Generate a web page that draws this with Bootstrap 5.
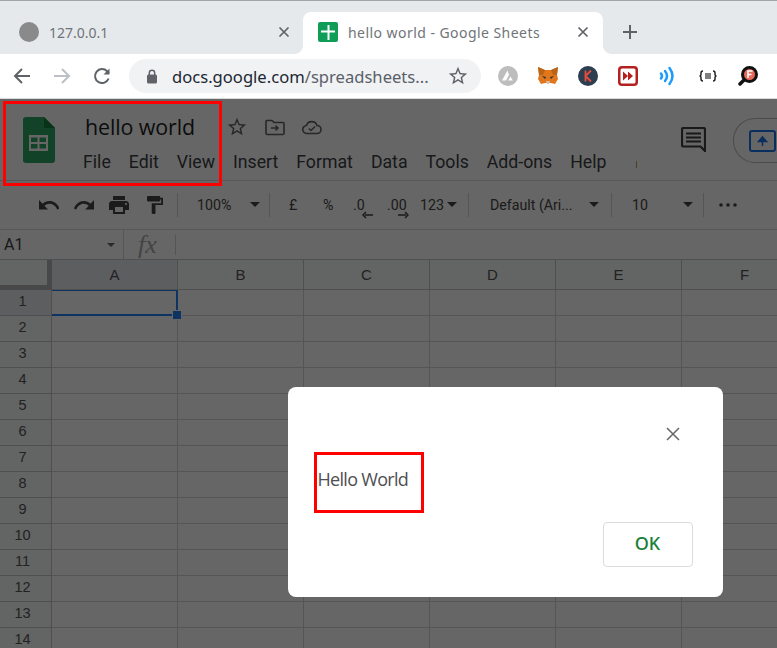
<!doctype html>
<html lang="en">
<head>
<meta charset="utf-8">
<title>hello world - Google Sheets</title>
<link href="https://cdn.jsdelivr.net/npm/bootstrap@5.3.0/dist/css/bootstrap.min.css" rel="stylesheet">
<style>
html,body{height:648px;overflow:hidden;background:#fff}
body{font-family:"Roboto","Liberation Sans",sans-serif;position:relative;width:777px}
.tabstrip{height:54px;background:#e6e9ec;border-top:1px solid #a3a5a7;padding-top:11px}
.tab-a{width:303px;height:42px;padding:0 12px 2px 19px;color:#6f7478;font:14px "Noto Sans",sans-serif}
.tab-b{width:300px;height:42px;background:#fff;border-radius:8px 8px 0 0;padding:0 13px 2px 15px;color:#6f7478;font:14px "Noto Sans",sans-serif;letter-spacing:.45px;position:relative}
.tab-b::before,.tab-b::after{content:"";position:absolute;bottom:0;width:8px;height:8px}
.tab-b::before{left:-8px;background:radial-gradient(circle at 0 0,transparent 7.5px,#fff 8px)}
.tab-b::after{right:-8px;background:radial-gradient(circle at 100% 0,transparent 7.5px,#fff 8px)}
.fav-grey{width:20px;height:20px;border-radius:50%;background:#8a8a8a;margin-right:10px}
.fav-sheet{margin-right:10px}
.tab-x{margin-left:auto}
.newtab{margin-left:19px;margin-bottom:2px}
.toolbar{height:45px;background:#fff;border-bottom:1px solid #d9dadb;padding:0 0 0 12px}
.tool-ico{width:20px;height:20px;margin-right:20px}
.omni{width:352px;height:34px;background:#f0f2f4;border-radius:17px;margin-left:-3px;padding:0 12px 0 17px;font:16.6px "Noto Sans",sans-serif;color:#5a6068;white-space:nowrap}
.omni b{font-weight:400;color:#202732}
.lock{margin-right:14px}
.ext-row{gap:20px;margin-left:17px}
.ext-row svg{display:block}
.sheet-head{height:82px;border-bottom:1px solid #dadce0;background:#fff;position:relative;padding-left:23px}
.logo{margin-top:18px}
.doc-title{font:21.4px/28px "Open Sans","Noto Sans",sans-serif;color:#1f1f1f;letter-spacing:-.1px}
.title-col{margin-left:28px;padding-top:14px}
.title-row{height:28px;margin-left:2px}
.title-ico{gap:17px;margin-left:31px}
.menus{font:17.7px/24px Roboto,sans-serif;color:#3c4043;gap:18px;margin-top:9px}
.tick{position:absolute;left:636px;top:62px;width:1px;height:7px;background:#b9a24a}
.head-right{margin-left:auto;gap:27px}
.cmt{margin-top:28px}
.share{width:44px;height:45px;border:1px solid #bbb;border-radius:22px 0 0 22px;border-right:0;padding:11px 0 0 15px;margin-top:19px}
.tbar{height:49px;background:#fff;border-bottom:1px solid #dadce0;padding-left:39px;font:14.2px Roboto,sans-serif;color:#444746;display:grid;grid-template-columns:35px 35px 38px 30px 20px 53px 19px 20px 34px 30px 34px 33px 27px 21px 22px 99px 22px 21px 51px 20px 16px 18px;align-items:center;justify-items:start;padding-bottom:1px}
.sep{display:block;width:1px;height:24px;background:#d5d5d5}
.arr{display:block}
.dec{position:relative;display:block}
.dec svg{position:absolute;top:14px}
.dec-l svg{left:9px}
.dec-r svg{left:11px}
.fbar{height:30px;background:#fff;border-bottom:1px solid #c4c7c5;font:16px Roboto,sans-serif;color:#3c4043;padding-left:4px}
.cellname{width:103px}
.fbar .sep-a{width:1px;height:100%;background:#d5d5d5;margin-left:8px}
.fbar .sep-b{width:1px;height:20px;background:#d5d5d5}
.fx{font:italic 26px/28px "Liberation Serif",serif;color:#aaa;margin-left:14px;width:37px}
.gridhead,.gridwrap{display:grid;grid-template-columns:52px repeat(6,126px);font:14px "Liberation Sans",Arial,sans-serif;color:#444}
.gridwrap{grid-auto-rows:26px;background:#fff}
.gcell{border-right:1px solid #d4d4d4;border-bottom:1px solid #d4d4d4}
.ghead{height:30px;background:#f8f9fa;border-right:1px solid #c4c7c5;border-bottom:1px solid #c4c7c5;display:flex;align-items:center;justify-content:center;color:#555;font-size:15px}
.ghead.corner{border-right:5px solid #b5b5b5;border-bottom:5px solid #b5b5b5}
.ghead.on,.rownum.on{background:#e8eaed}
.rownum{background:#f8f9fa;border-right:1px solid #c4c7c5;border-bottom:1px solid #c4c7c5;display:flex;align-items:center;justify-content:center;color:#555;font-size:14.5px;padding-bottom:3px;padding-right:6px}
.selcell{position:absolute;left:52px;top:290px;width:126px;height:26px;border-top:1px solid #1e80f5;border-right:2px solid #1e80f5;border-bottom:2px solid #1e80f5}
.handle{position:absolute;right:-5px;bottom:-5px;width:8px;height:8px;background:#1e80f5;box-shadow:0 0 0 1px #fff}
.dim{position:absolute;left:0;top:99px;width:777px;height:549px;background:rgba(0,0,0,.6)}
.dlg{position:absolute;left:288px;top:387px;width:435px;height:210px;background:#fff;border-radius:8px}
.dlg-x{position:absolute;left:377px;top:39px}
.dlg-text{position:absolute;left:29.500px;top:80px;font:18px/24px "Open Sans","Noto Sans",sans-serif;color:#4e4f52;letter-spacing:-.7px}
.ok{position:absolute;left:315px;top:135px;width:90px;height:45px;border:1px solid #dadce0;border-radius:4px;background:#fff;color:#188038;font:500 18px "Noto Sans",sans-serif;padding:0 1px 4px 0}
.redbox{position:absolute;border:3px solid #f00}
.rb1{left:3px;top:101px;width:219px;height:85px}
.rb2{left:314px;top:452px;width:110px;height:61px}
</style>
</head>
<body>
<div class="tabstrip d-flex">
  <div class="tab-a d-flex align-items-center">
    <span class="fav-grey"></span><span>127.0.0.1</span>
    <svg class="tab-x" width="14" height="14" viewBox="0 0 14 14"><path d="M2.500 2.500l9 9M11.500 2.500l-9 9" stroke="#5f6368" stroke-width="1.700"/></svg>
  </div>
  <div class="tab-b d-flex align-items-center">
    <svg class="fav-sheet" width="20" height="20" viewBox="0 0 20 20"><rect width="20" height="20" rx="2" fill="#0f9d58"/><path d="M3 9.500h14M10.500 3v15" stroke="#fff" stroke-width="2"/></svg>
    <span>hello world - Google Sheets</span>
    <svg class="tab-x" width="14" height="14" viewBox="0 0 14 14"><path d="M2.500 2.500l9 9M11.500 2.500l-9 9" stroke="#5f6368" stroke-width="1.700"/></svg>
  </div>
  <svg class="newtab align-self-center" width="16" height="16" viewBox="0 0 16 16"><path d="M8 1v14M1 8h14" stroke="#5f6368" stroke-width="2"/></svg>
</div>
<div class="toolbar d-flex align-items-center">
  <svg class="tool-ico" viewBox="0 0 20 20"><path d="M18 10H3.500M10 3l-7 7 7 7" fill="none" stroke="#5f6368" stroke-width="2"/></svg>
  <svg class="tool-ico" viewBox="0 0 20 20"><path d="M2 10h14.500M10 3l7 7-7 7" fill="none" stroke="#bdc0c4" stroke-width="2"/></svg>
  <svg class="tool-ico" viewBox="0 0 20 20"><path d="M16.600 12.500a7 7 0 1 1-1.500-7.300L17 7" fill="none" stroke="#5f6368" stroke-width="2"/><path d="M17.500 2.500v6h-6z" fill="#5f6368"/></svg>
  <div class="omni d-flex align-items-center">
    <svg class="lock" width="12" height="15" viewBox="0 0 12 15"><rect x="1" y="5.500" width="10" height="9" rx="1.500" fill="#5f6368"/><path d="M3.300 6V4a2.700 2.700 0 0 1 5.400 0v2" fill="none" stroke="#5f6368" stroke-width="1.500"/></svg>
    <span><b>docs.google.com</b>/spreadsheets...</span>
    <svg class="ms-auto" width="22" height="22" viewBox="0 0 24 24"><path fill="#5f6368" d="M22 9.240l-7.190-.62L12 2 9.190 8.630 2 9.240l5.460 4.730L5.820 21 12 17.270 18.180 21l-1.630-7.030L22 9.240zM12 15.400l-3.760 2.270 1-4.280-3.320-2.880 4.380-.38L12 6.100l1.710 4.040 4.380.38-3.320 2.880 1 4.280L12 15.400z"/></svg>
  </div>
  <div class="ext-row d-flex align-items-center">
    <svg width="20" height="20" viewBox="0 0 20 20"><circle cx="10" cy="10" r="10" fill="#bdbdbd"/><path d="M9.500 4.500L4 14.500h4l3-5.500zM12.500 10.500l-2.300 4h4.600z" fill="#fff"/></svg>
    <svg width="20" height="20" viewBox="0 0 20 20"><path d="M0 1l7 3h6l7-3-1 8 1 4-3 5-4-1H7l-4 1-3-5 1-4z" fill="#e2761b"/><path d="M0 1l7 3-2 5-4 0zM20 1l-7 3 2 5 4 0z" fill="#b8651a"/><path d="M4 10l4 1-1 2zM16 10l-4 1 1 2z" fill="#233447"/><path d="M8 15h4l-1 3H9z" fill="#d7c1b3"/></svg>
    <svg width="20" height="20" viewBox="0 0 20 20"><circle cx="10" cy="10" r="10" fill="#2c3e50"/><path d="M7.500 4.500v11M13 4.500l-5.500 5.500 5.500 5.500" fill="none" stroke="#e74c3c" stroke-width="1.800"/></svg>
    <svg width="20" height="20" viewBox="0 0 20 20"><rect width="20" height="20" rx="4" fill="#b3201f"/><rect x="2.500" y="2.500" width="15" height="15" rx="1.500" fill="#fff"/><path d="M5 5.500l5 4.500-5 4.500zM10 5.500l5 4.500-5 4.500z" fill="#b3201f"/></svg>
    <svg width="20" height="20" viewBox="0 0 20 20"><path d="M3 7.500q2 2.500 0 5M7 5q4 5 0 10M11.500 2q6 8 0 16" fill="none" stroke="#1a9bff" stroke-width="2.500" stroke-linecap="round"/></svg>
    <svg width="20" height="20" viewBox="0 0 20 20"><path d="M5 5q-2 0-2 2v1.500q0 1.500-1.500 1.500Q3 10 3 11.500V13q0 2 2 2M15 5q2 0 2 2v1.500q0 1.500 1.500 1.500-1.500 0-1.500 1.500V13q0 2-2 2" fill="none" stroke="#222" stroke-width="1.500"/><path d="M7 8h6M7 10h6M7 12h6" stroke="#555" stroke-width="1.300"/></svg>
    <svg width="20" height="20" viewBox="0 0 20 20"><circle cx="11.500" cy="8.500" r="7" fill="#e8685c" stroke="#111" stroke-width="3"/><path d="M6 14l-4 4" stroke="#111" stroke-width="3.500" stroke-linecap="round"/><path d="M14.500 5h-4.500v7M10 8.500h3.500" fill="none" stroke="#fff" stroke-width="1.500"/></svg>
  </div>
</div>

<div class="sheet-head d-flex">
  <svg class="logo" width="32" height="46" viewBox="0 0 32 46"><path d="M3 0h18l11 11v32a3 3 0 0 1-3 3H3a3 3 0 0 1-3-3V3a3 3 0 0 1 3-3z" fill="#2da564"/><path d="M21 0l11 11H21z" fill="#188038"/><rect x="6" y="18" width="19" height="16" fill="#fff"/><path d="M8 20.500h6.500V25H8zM16.500 20.500H23V25h-6.500zM8 27h6.500v4.500H8zM16.500 27H23v4.500h-6.500z" fill="#2da564"/></svg>
  <div class="title-col">
    <div class="title-row d-flex align-items-center">
      <span class="doc-title">hello world</span>
      <div class="title-ico d-flex align-items-center">
        <svg width="22" height="22" viewBox="0 0 24 24"><path fill="#5f6368" d="M22 9.240l-7.190-.62L12 2 9.190 8.630 2 9.240l5.460 4.730L5.820 21 12 17.270 18.180 21l-1.630-7.030L22 9.240zM12 15.400l-3.760 2.270 1-4.280-3.320-2.880 4.380-.38L12 6.100l1.710 4.040 4.380.38-3.320 2.880 1 4.280L12 15.400z"/></svg>
        <svg width="20" height="18" viewBox="0 0 20 18"><path d="M1 3.500a1 1 0 0 1 1-1h5l2 2h9a1 1 0 0 1 1 1v10a1 1 0 0 1-1 1H2a1 1 0 0 1-1-1z" fill="none" stroke="#5f6368" stroke-width="1.600"/><path d="M6 10h7M10.500 7.500L13 10l-2.500 2.500" fill="none" stroke="#5f6368" stroke-width="1.500"/></svg>
        <svg width="20" height="15" viewBox="0 0 20 15"><path d="M5 13.500a4 4 0 0 1-.5-8 5.500 5.500 0 0 1 10.500 0 4 4 0 0 1 0 8z" fill="none" stroke="#5f6368" stroke-width="1.600"/><path d="M6.800 8.500L9 10.500l4-4" fill="none" stroke="#5f6368" stroke-width="1.500"/></svg>
      </div>
    </div>
    <div class="menus d-flex">
      <span>File</span><span>Edit</span><span>View</span><span>Insert</span><span>Format</span><span>Data</span><span>Tools</span><span>Add-ons</span><span>Help</span>
    </div>
  </div>
  <span class="tick"></span>
  <div class="head-right d-flex">
    <svg class="cmt" width="25" height="25" viewBox="0 0 25 25"><path d="M2.500 1h20a1.500 1.500 0 0 1 1.500 1.500V24l-4.500-4.500H2.500A1.500 1.500 0 0 1 1 18V2.500A1.500 1.500 0 0 1 2.500 1z" fill="none" stroke="#3c4043" stroke-width="2.200"/><path d="M5 6.500h15M5 10.500h15M5 14.500h15" stroke="#3c4043" stroke-width="2"/></svg>
    <div class="share"><svg class="d-block" width="27" height="22" viewBox="0 0 27 22"><rect x="1" y="1" width="25" height="20" rx="2" fill="none" stroke="#1a73e8" stroke-width="2"/><path d="M13.500 16V9M9.500 11.500l4-4.500 4 4.500z" fill="#1a73e8" stroke="#1a73e8" stroke-width="1.500"/></svg></div>
  </div>
</div>

<div class="tbar">
  <svg class="arr" width="20" height="10" viewBox="2 7 20 9.500" preserveAspectRatio="none"><path fill="#444" d="M12.500 8c-2.650 0-5.050.990-6.900 2.600L2 7v9h9l-3.620-3.620c1.390-1.160 3.160-1.880 5.120-1.880 3.540 0 6.550 2.310 7.600 5.500l2.370-.780C21.080 11.030 17.150 8 12.500 8z"/></svg>
  <svg class="arr" width="20" height="10" viewBox="1.500 7 20.500 9.500" preserveAspectRatio="none"><path fill="#444" d="M18.400 10.600C16.550 8.990 14.150 8 11.500 8c-4.650 0-8.580 3.030-9.960 7.220L3.900 16c1.050-3.190 4.050-5.500 7.600-5.500 1.950 0 3.730.720 5.120 1.880L13 16h9V7l-3.600 3.600z"/></svg>
  <svg class="arr" width="20" height="18" viewBox="2 3 20 18"><path fill="#444" d="M19 8H5c-1.660 0-3 1.340-3 3v6h4v4h12v-4h4v-6c0-1.660-1.340-3-3-3zm-3 11H8v-5h8v5zm3-7c-.550 0-1-.450-1-1s.450-1 1-1 1 .450 1 1-.450 1-1 1zm-1-9H6v4h12V3z"/></svg>
  <svg class="arr" width="16" height="18" viewBox="4 2 17 20" preserveAspectRatio="none"><path fill="#444" d="M18 4V3c0-.550-.450-1-1-1H5c-.550 0-1 .450-1 1v4c0 .550.450 1 1 1h12c.550 0 1-.450 1-1V6h1v4H9v11c0 .550.450 1 1 1h2c.550 0 1-.450 1-1v-9h8V4h-3z"/></svg>
  <span class="sep"></span>
  <span>100%</span>
  <svg class="arr" width="10" height="5" viewBox="0 0 10 5"><path d="M0 0h10L5 5z" fill="#444"/></svg>
  <span class="sep"></span>
  <span>£</span>
  <span>%</span>
  <span class="dec dec-l">.0<svg width="11" height="8" viewBox="0 0 11 8"><path d="M11 4H3M4 1L1 4l3 3" fill="none" stroke="#444" stroke-width="1.500"/></svg></span>
  <span class="dec dec-r">.00<svg width="11" height="8" viewBox="0 0 11 8"><path d="M0 4h8M7 1l3 3-3 3" fill="none" stroke="#444" stroke-width="1.500"/></svg></span>
  <span>123</span>
  <svg class="arr" width="10" height="5" viewBox="0 0 10 5"><path d="M0 0h10L5 5z" fill="#444"/></svg>
  <span class="sep"></span>
  <span class="text-nowrap">Default (Ari...</span>
  <svg class="arr" width="10" height="5" viewBox="0 0 10 5"><path d="M0 0h10L5 5z" fill="#444"/></svg>
  <span class="sep"></span>
  <span>10</span>
  <svg class="arr" width="10" height="5" viewBox="0 0 10 5"><path d="M0 0h10L5 5z" fill="#444"/></svg>
  <span class="sep"></span>
  <svg class="arr" width="18" height="4" viewBox="0 0 18 4"><circle cx="2" cy="2" r="1.800" fill="#444"/><circle cx="9" cy="2" r="1.800" fill="#444"/><circle cx="16" cy="2" r="1.800" fill="#444"/></svg>
</div>
<div class="fbar d-flex align-items-center">
  <span class="cellname">A1</span>
  <svg width="8" height="4" viewBox="0 0 8 4"><path d="M0 0h8L4 4z" fill="#666"/></svg>
  <span class="sep-a"></span>
  <span class="fx">fx</span><span class="sep-b"></span>
</div>
<div class="gridhead">
  <div class="ghead corner"></div><div class="ghead on">A</div><div class="ghead">B</div><div class="ghead">C</div><div class="ghead">D</div><div class="ghead">E</div><div class="ghead">F</div>
</div>
<div class="gridwrap" id="g"></div>
<div class="selcell"><span class="handle"></span></div>
<div class="dim"></div>
<div class="redbox rb1"></div>
<div class="dlg">
  <svg class="dlg-x" width="16" height="16" viewBox="0 0 16 16"><path d="M2 2l12 12M14 2L2 14" stroke="#666" stroke-width="1.500"/></svg>
  <div class="dlg-text">Hello World</div>
  <button class="ok" type="button">OK</button>
</div>
<div class="redbox rb2"></div>
<script>
var g=document.getElementById('g'),h='';
for(var r=1;r<=14;r++){h+='<div class="rownum'+(r==1?' on':'')+'">'+r+'</div>';for(var c=0;c<6;c++)h+='<div class="gcell"></div>';}
g.innerHTML=h;
</script>
<script src="https://cdn.jsdelivr.net/npm/bootstrap@5.3.0/dist/js/bootstrap.bundle.min.js"></script>
</body>
</html>
